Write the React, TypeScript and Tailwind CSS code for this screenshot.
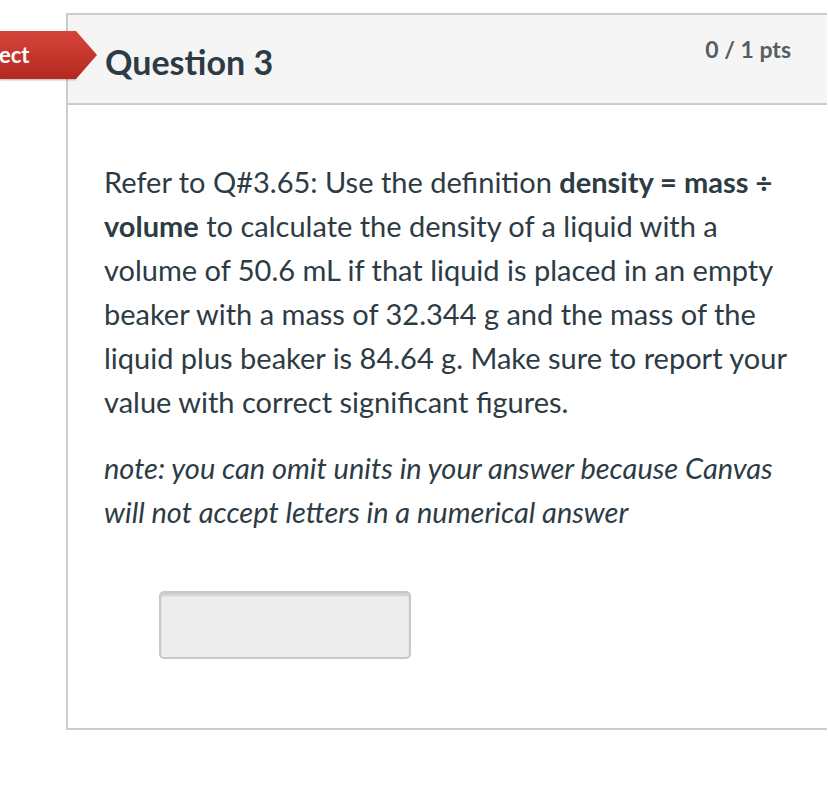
export default function App() {
  return (
    <div className="relative min-h-[790px] w-[828px] bg-white pt-[13px] pl-[66px] font-['Lato','Liberation_Sans',sans-serif] text-[#2d3b45]">
      {/* status tag, sticks out over the card edge */}
      <div className="absolute left-0 top-[31px] flex h-[48px] items-center">
        <div className="flex h-full w-[76px] items-center bg-gradient-to-b from-[#d6443a] to-[#b3291f] pl-0 shadow-[0_1px_2px_rgba(0,0,0,0.3)]">
          <span className="-ml-[1px] text-[22px] font-bold leading-none text-white">ect</span>
        </div>
        <svg width="21" height="48" viewBox="0 0 21 48" className="block">
          <defs>
            <linearGradient id="tg" x1="0" y1="0" x2="0" y2="1">
              <stop offset="0" stopColor="#d6443a" />
              <stop offset="1" stopColor="#b3291f" />
            </linearGradient>
          </defs>
          <polygon points="0,0 21,24 0,48" fill="url(#tg)" />
        </svg>
      </div>

      <div className="w-[761px] border-2 border-r-0 border-[#c7cdd1]">
        <div className="flex h-[90px] items-start justify-between border-b-2 border-[#c7cdd1] bg-[#f5f5f5] pl-[37px] pr-[36px]">
          <h2 className="mt-[27px] text-[34px] font-bold leading-[40px] text-[#2d3b45]">Question 3</h2>
          <div className="mt-[20px] text-[23px] font-bold leading-[28px] text-[#555e63]">0 / 1 pts</div>
        </div>

        <div className="pl-[36px] pr-[36px] pt-[55px] pb-[69px]">
          <p className="text-[29px] leading-[44px]">
            Refer to Q#3.65: Use the definition <strong>density = mass ÷ volume</strong> to calculate the density of a
            liquid with a volume of 50.6 mL if that liquid is placed in an empty beaker with a mass of 32.344 g and the
            mass of the liquid plus beaker is 84.64 g. Make sure to report your value with correct significant figures.
          </p>
          <p className="mt-[22px] text-[29px] italic leading-[44px]">
            note: you can omit units in your answer because Canvas will not accept letters in a numerical answer
          </p>
          <div className="ml-[55px] mt-[57px] h-[68px] w-[252px] rounded-[5px] border-2 border-[#c8c8c8] bg-[#ededed] shadow-[inset_0_3px_2px_rgba(0,0,0,0.12)]" />
        </div>
      </div>
    </div>
  );
}
